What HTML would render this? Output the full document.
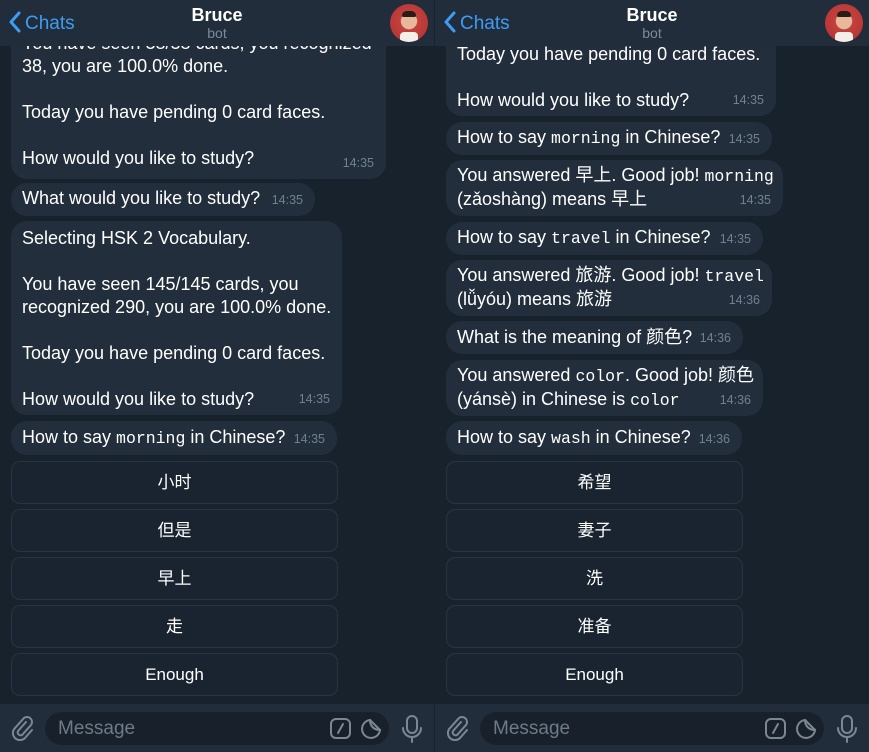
<!DOCTYPE html>
<html><head><meta charset="utf-8"><style>
*{margin:0;padding:0;box-sizing:border-box}
body{width:869px;height:752px;background:#18222d;position:relative;overflow:hidden;font-family:"Liberation Sans","Noto Sans CJK SC",sans-serif;color:#fff}
.p{position:absolute;top:0;width:434px;height:752px;overflow:hidden}
.hd{position:absolute;top:0;left:0;width:100%;height:46px;background:#212d3b;z-index:5}
.back{position:absolute;left:8px;top:11px;color:#3e9cf2;font-size:19px}
.back svg{vertical-align:-4px;margin-right:3px}
.ti{position:absolute;left:0;width:100%;text-align:center;top:5px;font-size:18px;font-weight:bold}
.sub{position:absolute;left:0;width:100%;text-align:center;top:25px;font-size:14px;color:#7d8b99}
.av{position:absolute;right:6px;top:4px;width:38px;height:38px;border-radius:50%;background:radial-gradient(circle at 50% 45%,#e8b89a 0 28%,#c2403d 30%,#b2302e 100%);overflow:hidden}
.av:after{content:"";position:absolute;left:10px;top:28px;width:18px;height:12px;background:#f3eee9;border-radius:4px 4px 0 0}
.av:before{content:"";position:absolute;left:12px;top:7px;width:14px;height:6px;background:#2a1d18;border-radius:6px 6px 2px 2px}
.b{position:absolute;left:11px;background:#222e3c;border-radius:16px;font-size:18px;line-height:23px;padding:0 0 0 11px;white-space:nowrap}
.b .t{position:absolute;font-size:12.5px;color:#6f8091;bottom:4px}
.m{font-family:"Liberation Mono","DejaVu Sans Mono",monospace;font-size:16.5px}
.k{position:absolute;left:11px;height:43px;border:1px solid #283442;border-radius:9px;background:#1a2430;text-align:center;line-height:41px;font-size:17px}
.ib{position:absolute;left:0;top:704px;width:100%;height:48px;background:#212d3b}
.in{position:absolute;left:45px;top:8px;width:344px;height:33px;border-radius:17px;background:#18212b;color:#6d7a87;font-size:19px;line-height:33px;padding-left:13px}
</style></head><body>

<div class="p" style="left:0">
<div class="hd"><div class="back"><svg width="14" height="22" viewBox="0 0 14 22"><path d="M11 2 3 11l8 9" stroke="#3e9cf2" stroke-width="3" fill="none" stroke-linecap="round" stroke-linejoin="round"/></svg>Chats</div><div class="ti">Bruce</div><div class="sub">bot</div><div class="av"></div></div>

<div class="b" style="top:20px;width:375px;height:159px;padding-top:12px">You have seen 38/38 cards, you recognized<br>38, you are 100.0% done.<br><br>Today you have pending 0 card faces.<br><br>How would you like to study?<span class="t" style="right:12px">14:35</span></div>
<div class="b" style="top:183px;width:304px;height:33px;padding-top:4px">What would you like to study?<span class="t" style="right:12px">14:35</span></div>
<div class="b" style="top:221px;width:331px;height:194px;padding-top:6px">Selecting HSK 2 Vocabulary.<br><br>You have seen 145/145 cards, you<br>recognized 290, you are 100.0% done.<br><br>Today you have pending 0 card faces.<br><br>How would you like to study?<span class="t" style="right:12px">14:35</span></div>
<div class="b" style="top:421px;width:326px;height:34px;padding-top:5px">How to say <span class="m">morning</span> in Chinese?<span class="t" style="right:12px">14:35</span></div>

<div class="k" style="top:461px;width:327px">小时</div>
<div class="k" style="top:509px;width:327px">但是</div>
<div class="k" style="top:557px;width:327px">早上</div>
<div class="k" style="top:605px;width:327px">走</div>
<div class="k" style="top:653px;width:327px">Enough</div>

<div class="ib">
<svg style="position:absolute;left:10px;top:11px" width="26" height="26" viewBox="0 0 26 26"><path d="M16 7 8 16a3 3 0 0 0 4 4l9-10a5 5 0 0 0-7-7L5 13a7 7 0 0 0 10 10l7-8" stroke="#7b8894" stroke-width="2" fill="none" stroke-linecap="round"/></svg>
<div class="in">Message
<svg style="position:absolute;right:38px;top:6px" width="21" height="21" viewBox="0 0 21 21"><rect x="1" y="1" width="19" height="19" rx="5" stroke="#7b8894" stroke-width="2" fill="none"/><path d="M13 6 8 15" stroke="#7b8894" stroke-width="2" stroke-linecap="round"/></svg>
<svg style="position:absolute;right:7px;top:6px" width="22" height="22" viewBox="0 0 22 22"><path d="M20 12A9 9 0 1 1 10 2c0 6 4 10 10 10zM10 2l10 10" stroke="#7b8894" stroke-width="2" fill="none"/></svg>
</div>
<svg style="position:absolute;left:401px;top:10px" width="22" height="30" viewBox="0 0 22 30"><rect x="6" y="2" width="10" height="17" rx="5" stroke="#7b8894" stroke-width="2" fill="none"/><path d="M2 14a9 9 0 0 0 18 0M11 23v5" stroke="#7b8894" stroke-width="2" fill="none" stroke-linecap="round"/></svg>
</div>
</div>

<div class="p" style="left:435px">
<div class="hd"><div class="back"><svg width="14" height="22" viewBox="0 0 14 22"><path d="M11 2 3 11l8 9" stroke="#3e9cf2" stroke-width="3" fill="none" stroke-linecap="round" stroke-linejoin="round"/></svg>Chats</div><div class="ti">Bruce</div><div class="sub">bot</div><div class="av"></div></div>

<div class="b" style="top:20px;width:330px;height:96px;padding-top:23px">Today you have pending 0 card faces.<br><br>How would you like to study?<span class="t" style="right:12px">14:35</span></div>
<div class="b" style="top:122px;width:326px;height:33px;padding-top:4px">How to say <span class="m">morning</span> in Chinese?<span class="t" style="right:12px">14:35</span></div>
<div class="b" style="top:160px;width:337px;height:56px;padding-top:4px">You answered 早上. Good job! <span class="m">morning</span><br>(zǎoshàng) means 早上<span class="t" style="right:12px">14:35</span></div>
<div class="b" style="top:222px;width:317px;height:33px;padding-top:4px">How to say <span class="m">travel</span> in Chinese?<span class="t" style="right:12px">14:35</span></div>
<div class="b" style="top:260px;width:326px;height:56px;padding-top:4px">You answered 旅游. Good job! <span class="m">travel</span><br>(lǚyóu) means 旅游<span class="t" style="right:12px">14:36</span></div>
<div class="b" style="top:321px;width:297px;height:33px;padding-top:5px">What is the meaning of 颜色?<span class="t" style="right:12px">14:36</span></div>
<div class="b" style="top:360px;width:317px;height:56px;padding-top:4px">You answered <span class="m">color</span>. Good job! 颜色<br>(yánsè) in Chinese is <span class="m">color</span><span class="t" style="right:12px">14:36</span></div>
<div class="b" style="top:421px;width:296px;height:34px;padding-top:5px">How to say <span class="m">wash</span> in Chinese?<span class="t" style="right:12px">14:36</span></div>

<div class="k" style="top:461px;width:297px">希望</div>
<div class="k" style="top:509px;width:297px">妻子</div>
<div class="k" style="top:557px;width:297px">洗</div>
<div class="k" style="top:605px;width:297px">准备</div>
<div class="k" style="top:653px;width:297px">Enough</div>

<div class="ib">
<svg style="position:absolute;left:10px;top:11px" width="26" height="26" viewBox="0 0 26 26"><path d="M16 7 8 16a3 3 0 0 0 4 4l9-10a5 5 0 0 0-7-7L5 13a7 7 0 0 0 10 10l7-8" stroke="#7b8894" stroke-width="2" fill="none" stroke-linecap="round"/></svg>
<div class="in">Message
<svg style="position:absolute;right:38px;top:6px" width="21" height="21" viewBox="0 0 21 21"><rect x="1" y="1" width="19" height="19" rx="5" stroke="#7b8894" stroke-width="2" fill="none"/><path d="M13 6 8 15" stroke="#7b8894" stroke-width="2" stroke-linecap="round"/></svg>
<svg style="position:absolute;right:7px;top:6px" width="22" height="22" viewBox="0 0 22 22"><path d="M20 12A9 9 0 1 1 10 2c0 6 4 10 10 10zM10 2l10 10" stroke="#7b8894" stroke-width="2" fill="none"/></svg>
</div>
<svg style="position:absolute;left:401px;top:10px" width="22" height="30" viewBox="0 0 22 30"><rect x="6" y="2" width="10" height="17" rx="5" stroke="#7b8894" stroke-width="2" fill="none"/><path d="M2 14a9 9 0 0 0 18 0M11 23v5" stroke="#7b8894" stroke-width="2" fill="none" stroke-linecap="round"/></svg>
</div>
</div>
</body></html>
